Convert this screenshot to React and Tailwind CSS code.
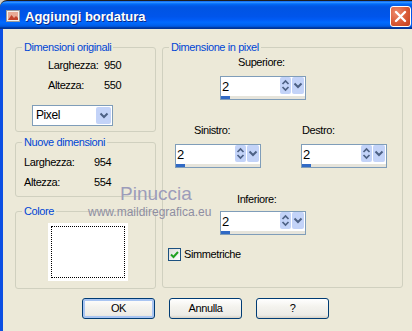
function SpinArrows() {
  return (
    <div className="mb-[1px] mt-[0px] flex h-[17px] w-[11px] items-center justify-center rounded-[2px] bg-[#C3D3F8]">
      <svg width="11" height="17" viewBox="0 0 11 17">
        <path d="M2.5 7 L5.5 4 L8.5 7" fill="none" stroke="#4D6185" strokeWidth="1.7" />
        <path d="M2.5 10 L5.5 13 L8.5 10" fill="none" stroke="#4D6185" strokeWidth="1.7" />
      </svg>
    </div>
  );
}

function DropArrow({ w = 12 }) {
  return (
    <div className={`flex h-[17px] items-center justify-center rounded-[2px] bg-[#C3D3F8] ${w === 12 ? 'w-[12px]' : 'w-[15px]'}`}>
      <svg width="10" height="17" viewBox="0 0 10 17">
        <path d="M1.5 6.5 L5 10 L8.5 6.5" fill="none" stroke="#4D6185" strokeWidth="2" />
      </svg>
    </div>
  );
}

function Spin({ value = '2' }) {
  return (
    <div className="flex h-[24px] w-[86px] flex-col border border-[#7F9DB9] bg-white">
      <div className="flex h-[19px] items-start">
        <span className="flex-1 pl-[1px] pt-[2px] text-[13px] leading-[15px]">{value}</span>
        <SpinArrows />
        <div className="ml-px mr-px">
          <DropArrow />
        </div>
      </div>
      <div className="flex h-[3px] bg-[#E6E4DB]">
        <div className="w-[9px] bg-[#316AC5]" />
      </div>
    </div>
  );
}

function Group({ title, className, children }) {
  return (
    <fieldset className={`rounded-[3px] border border-[#D0D0BF] ${className}`}>
      <legend className="ml-[6px] px-[2px] text-[#0046D5]">{title}</legend>
      {children}
    </fieldset>
  );
}

function XpButton({ label, isDefault }) {
  return (
    <button
      className={`h-[21px] w-[73px] rounded-[3px] border border-[#003C74] bg-[linear-gradient(180deg,#ffffff_0%,#f4f3ee_40%,#ecebe6_85%,#d6d0c5_100%)] text-[11px] leading-[13px] text-black ${
        isDefault ? 'shadow-[inset_0_0_0_2px_#A9C5F2]' : ''
      }`}
    >
      {label}
    </button>
  );
}

export default function App() {
  return (
    <div className="relative flex h-[331px] w-[412px] flex-col overflow-hidden bg-[#D4D0C8] font-['Liberation_Sans',Arial,sans-serif] text-[11px] leading-[13px] tracking-[-0.4px] text-black">
      {/* title bar */}
      <div className="flex h-[29px] shrink-0 items-center rounded-tl-[7px] border-t border-t-[#1e1e1e] bg-[linear-gradient(180deg,#0058EE_0%,#3593FF_4%,#288EFF_6%,#127DFF_8%,#036FFC_10%,#0262EE_14%,#0057E5_20%,#0054E3_24%,#0055EB_56%,#005BF5_66%,#026AFE_76%,#0062EF_86%,#0052D6_92%,#0040AB_94%,#003092_100%)] pl-[5px] pr-px pt-[2px]">
        <svg width="16" height="16" viewBox="0 0 16 16" className="mr-[4px] shrink-0">
          <rect x="1.5" y="2.5" width="13" height="11" fill="#f3f1ee" stroke="#9a9a9a" />
          <rect x="3" y="4" width="10" height="8" fill="#e8ab96" />
          <path d="M3 12 L6.5 7 L9 10 L11 8 L13 10 V12 Z" fill="#c2432c" />
        </svg>
        <span className="flex-1 text-[13px] font-bold tracking-normal text-white [text-shadow:1px_1px_0_#0a2a8a]">
          Aggiungi bordatura
        </span>
        <div className="flex h-[21px] w-[21px] items-center justify-center rounded-[3px] border border-white bg-[radial-gradient(circle_at_30%_30%,#EE8B6E,#D95A36_55%,#C13E1A)]">
          <svg width="13" height="13" viewBox="0 0 13 13">
            <path d="M2 2 L11 11 M11 2 L2 11" stroke="#fff" strokeWidth="2.4" strokeLinecap="round" />
          </svg>
        </div>
      </div>

      {/* body */}
      <div className="flex flex-1 flex-col border-l-[3px] border-l-[#0B4FE3] bg-[#ECE9D8] pl-[12px] pt-[12px]">
        <div className="flex items-start gap-[6px]">
          {/* left column */}
          <div className="flex w-[141px] flex-col">
            <Group title="Dimensioni originali" className="h-[91px]">
              <div className="flex flex-col pt-[5px]">
                <div className="flex pl-[32px]">
                  <span className="w-[56px]">Larghezza:</span>
                  <span>950</span>
                </div>
                <div className="mt-[7px] flex pl-[32px]">
                  <span className="w-[56px]">Altezza:</span>
                  <span>550</span>
                </div>
                <div className="ml-[16px] mt-[13px] flex h-[21px] w-[81px] items-center border border-[#7F9DB9] bg-white pr-px">
                  <span className="flex-1 pl-[3px] text-[12px]">Pixel</span>
                  <DropArrow w={15} />
                </div>
              </div>
            </Group>

            <Group title="Nuove dimensioni" className="mt-[4px] h-[61px]">
              <div className="flex flex-col pl-[8px] pt-[7px]">
                <div className="flex">
                  <span className="w-[70px]">Larghezza:</span>
                  <span>954</span>
                </div>
                <div className="mt-[7px] flex">
                  <span className="w-[70px]">Altezza:</span>
                  <span>554</span>
                </div>
              </div>
            </Group>

            <Group title="Colore" className="mt-[8px] h-[84px]">
              <div className="ml-[32px] mt-[5px] h-[58px] w-[80px] bg-white p-[3px]">
                <div className="h-full w-full border border-dotted border-black" />
              </div>
            </Group>
          </div>

          {/* right column */}
          <Group title="Dimensione in pixel" className="h-[247px] w-[241px]">
            <div className="flex flex-col">
              <div className="ml-[57px] mt-[2px] flex flex-col">
                <span className="pl-[18px]">Superiore:</span>
                <div className="mt-[7px]">
                  <Spin />
                </div>
              </div>

              <div className="ml-[12px] mt-[24px] flex gap-[40px]">
                <div className="flex flex-col">
                  <span className="pl-[19px]">Sinistro:</span>
                  <div className="mt-[7px]">
                    <Spin />
                  </div>
                </div>
                <div className="flex flex-col">
                  <span className="pl-[1px]">Destro:</span>
                  <div className="mt-[7px]">
                    <Spin />
                  </div>
                </div>
              </div>

              <div className="ml-[57px] mt-[25px] flex flex-col">
                <span className="pl-[17px]">Inferiore:</span>
                <div className="mt-[5px]">
                  <Spin />
                </div>
              </div>

              <div className="ml-[5px] mt-[13px] flex items-center gap-[3px]">
                <div className="flex h-[13px] w-[13px] items-center justify-center border border-[#1C5180] bg-[linear-gradient(135deg,#dcdcd7,#ffffff)]">
                  <svg width="11" height="11" viewBox="0 0 11 11">
                    <path d="M2 5.5 L4.5 8 L9 3" fill="none" stroke="#21A121" strokeWidth="2" />
                  </svg>
                </div>
                <span>Simmetriche</span>
              </div>
            </div>
          </Group>
        </div>

        <div className="ml-[67px] mt-[9px] flex gap-[14px]">
          <XpButton label="OK" isDefault />
          <XpButton label="Annulla" />
          <XpButton label="?" />
        </div>
      </div>

      {/* watermark */}
      <span className="pointer-events-none absolute left-[120px] top-[184px] text-[19px] leading-[19px] tracking-normal text-[#9c9cba]">
        Pinuccia
      </span>
      <span className="pointer-events-none absolute left-[88px] top-[206px] text-[12px] leading-[12px] tracking-normal text-[#8e8ea2]">
        www.maildiregrafica.eu
      </span>
    </div>
  );
}
